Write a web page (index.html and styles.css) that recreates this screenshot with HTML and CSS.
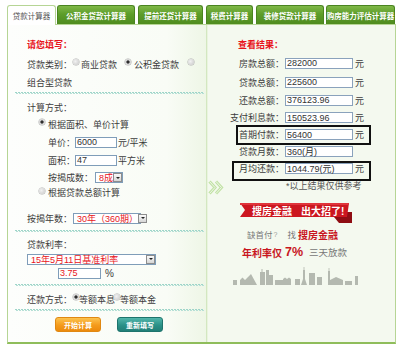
FILE: index.html
```html
<!DOCTYPE html>
<html lang="zh">
<head>
<meta charset="utf-8">
<title>贷款计算器</title>
<link rel="stylesheet" href="styles.css">
</head>
<body>
<div class="tabs">
  <div class="tab active w1">贷款计算器</div>
  <div class="tab w2">公积金贷款计算器</div>
  <div class="tab w3">提前还贷计算器</div>
  <div class="tab w4">税费计算器</div>
  <div class="tab w5">装修贷款计算器</div>
  <div class="tab w6">购房能力评估计算器</div>
</div>
<div class="content">
  <div class="left">
    <div class="l title">请您填写：</div>
    <div class="l h20"><span>贷款类别：</span><i class="radio g1"></i><span>商业贷款</span><i class="radio on g2"></i><span>公积金贷款</span><i class="radio g3"></i></div>
    <div class="l h16">组合型贷款</div>
    <div class="sep"></div>
    <div class="l h18 mt4">计算方式：</div>
    <div class="l h16 sub"><i class="radio on g4"></i>根据面积、单价计算</div>
    <div class="l h18 mt1 sub2"><span>单价：</span><span class="input iw42">6000</span><span class="u1">元/平米</span></div>
    <div class="l h18 sub2"><span>面积：</span><span class="input iw42">47</span><span class="u1">平方米</span></div>
    <div class="l h17 sub2"><span>按揭成数：</span><span class="select s8"><span>8成</span><b class="dd"></b></span></div>
    <div class="l h13 sub"><i class="radio g4"></i>根据贷款总额计算</div>
    <div class="l h18 mt10"><span>按揭年数：</span><span class="select s30"><span>30年（360期）</span><b class="dd"></b></span></div>
    <div class="sep mt3"></div>
    <div class="l h17 mt4">贷款利率：</div>
    <div class="l h12"><span class="select srate"><span>15年5月11日基准利率</span><b class="dd"></b></span></div>
    <div class="l h12 mt2 ind"><span class="input iw43 red">3.75</span><span class="pct">%</span></div>
    <div class="sep mt5"></div>
    <div class="l h18 mt4"><span>还款方式：</span><i class="radio on g5"></i><span>等额本息</span><i class="radio g6"></i><span>等额本金</span></div>
    <div class="sep mt1"></div>
    <div class="btns"><span class="btn orange">开始计算</span><span class="btn teal">重新填写</span></div>
  </div>
  <div class="divider"></div>
  <div class="right">
    <div class="rtitle">查看结果：</div>
    <div class="res h18"><span class="rl">房款总额：</span><span class="rin">282000</span><span class="unit">元</span></div>
    <div class="res h18 mt1"><span class="rl">贷款总额：</span><span class="rin">225600</span><span class="unit">元</span></div>
    <div class="res h18"><span class="rl">还款总额：</span><span class="rin">376123.96</span><span class="unit">元</span></div>
    <div class="res h17"><span class="rl">支付利息款：</span><span class="rin">150523.96</span><span class="unit">元</span></div>
    <div class="res h17 box1"><span class="rl">首期付款：</span><span class="rin">56400</span><span class="unit">元</span></div>
    <div class="res h17"><span class="rl">贷款月数：</span><span class="rin">360(月)</span></div>
    <div class="res h17 box2"><span class="rl">月均还款：</span><span class="rin">1044.79(元)</span><span class="unit">元</span></div>
    <div class="note">*以上结果仅供参考</div>
    <div class="promo">
      <div class="ribbon">
        <svg class="ribbon-bg" width="112" height="20" viewBox="0 0 112 20">
          <polygon points="94,9 112,9 112,20 99,20 94,14" fill="#8f0d13"/>
          <polygon points="0,0 109,0 107,14 0,14 5,7" fill="#cc1720"/>
          <polygon points="0,0 109,0 108.6,2 0,2" fill="#e0343b"/>
        </svg>
        <span class="rtext">搜房金融<span class="gap"></span>出大招了!</span>
      </div>
      <div class="p1"><span class="gray">缺首付</span><span class="q">?</span><span class="gray zhao">找</span><b class="redb">搜房金融</b></div>
      <div class="p2"><b class="redb">年利率仅</b><b class="redb big">7%</b><span class="gray2">三天放款</span></div>
      <div class="skyline">
        <svg width="126" height="18" viewBox="0 0 126 18">
          <polygon fill="#b4b9b0" points="1,18 1,13 5,13 5,18 8,18 8,13 10.5,10.5 13,13 19,7 25,18 28,18 28,5 29.5,5 29.5,2 30.5,2 30.5,5 33,5 33,18 34,18 34,3 37,3 37,8 41,8 41,18 43,18 43,13 51,13 51,12 53,10.5 55,12 57,10.5 59,12 59,18 63,18 63,12 68,12 68,18 69,18 71,12 71,3 71.6,3 71.6,0 72.4,0 72.4,3 73,3 73,12 75,18 77,18 77,6 83,6 83,18 85,18 85,10 90,10 90,18 96,18 96,4 96.6,4 96.6,1 97.4,1 97.4,4 98,4 98,13 104,10 111,13 111,18 113,18 113,14 120,14 120,18 123,18 123,9 126,9 126,18"/>
        </svg>
      </div>
    </div>
  </div>
  <svg class="chev" width="16" height="15" viewBox="0 0 16 15">
    <polyline points="1.5,1.5 7,7.5 1.5,13.5" fill="none" stroke="#c2e2a6" stroke-width="3"/>
    <polyline points="8,1.5 13.5,7.5 8,13.5" fill="none" stroke="#c2e2a6" stroke-width="3"/>
    <polyline points="1.5,1.5 7,7.5 1.5,13.5" fill="none" stroke="#eef8e6" stroke-width="1"/>
    <polyline points="8,1.5 13.5,7.5 8,13.5" fill="none" stroke="#eef8e6" stroke-width="1"/>
  </svg>
</div>
</body>
</html>
```

FILE: styles.css
```css
* { box-sizing: border-box; margin: 0; padding: 0; }
html, body { width: 400px; height: 351px; overflow: hidden; background: #fff; }
body {
  font-family: "Liberation Sans", "Noto Sans CJK SC", sans-serif;
  font-size: 9px;
  color: #3c3c3c;
}

/* tabs */
.tabs { display: flex; align-items: flex-end; height: 24px; padding: 5px 0 0 7px; position: relative; z-index: 2; }
.tab {
  height: 19px;
  display: flex; align-items: center; justify-content: center;
  white-space: nowrap;
  font-size: 7.5px; font-weight: bold; color: #fff;
  background: linear-gradient(#80b848, #5d9d2a 45%, #4f8c1f);
  border: 1px solid #4a8420; border-bottom: none;
  border-radius: 3px 3px 0 0;
}
.tab.active {
  background: #fff; color: #555; font-weight: normal;
  border-color: #b6d595;
  height: 20px; margin-bottom: -1px;
}
.w1 { width: 49px; margin-right: 1px; }
.w2 { width: 78px; margin-right: 3px; }
.w3 { width: 65px; margin-right: 3px; }
.w4 { width: 47px; margin-right: 3px; }
.w5 { width: 68px; margin-right: 2px; }
.w6 { width: 69px; }

/* content box */
.content {
  position: relative;
  margin-left: 7px; width: 389px; height: 320px;
  border: 1px solid #b6d595; border-bottom: 2px solid #8fbd5b;
  display: flex;
}
.left {
  width: 198px;
  padding: 9px 0 0 19px;
  background: linear-gradient(90deg, #fdfefc, #f9fcf6 80%, #eef6e6);
}
.divider { width: 2px; background: linear-gradient(90deg, #d3e7c0 50%, #e9f4de 50%); }
.right { flex: 1; background: #f4f9ef; padding-top: 10px; }

/* left rows */
.l { display: flex; align-items: center; white-space: nowrap; }
.title { height: 20px; color: #e8141c; font-weight: bold; }
.h20 { height: 20px; }
.h18 { height: 18px; }
.h17 { height: 17px; }
.h16 { height: 16px; }
.h13 { height: 13px; }
.h12 { height: 12px; }
.mt1 { margin-top: 1px; }
.mt2 { margin-top: 2px; }
.mt3 { margin-top: 3px; }
.mt4 { margin-top: 4px; }
.mt5 { margin-top: 5px; }
.mt10 { margin-top: 10px; }
.sub { padding-left: 12px; }
.sub2 { padding-left: 21px; }
.ind { padding-left: 31px; }

.sep {
  height: 2px; width: 189px; margin: 2px 0 0 -12px;
  background:
    repeating-linear-gradient(90deg, #9fd5c9 0 2px, transparent 2px 3px) 0 0 / 100% 1px no-repeat,
    repeating-linear-gradient(90deg, transparent 0 1px, #b6e0d6 1px 3px) 0 1px / 100% 1px no-repeat;
}
.sep.mt1 { margin-top: 1px; }
.sep.mt3 { margin-top: 3px; }
.sep.mt5 { margin-top: 5px; }

.radio {
  display: inline-block; flex: none;
  width: 6px; height: 6px; border-radius: 50%;
  background: radial-gradient(circle at 40% 40%, #f2f2f2, #c6c6c6);
  box-shadow: 0 0 0 0.5px #b0b0b0;
  margin-bottom: 4px;
}
.radio.on { background: radial-gradient(circle, #2e2e2e 0 1.3px, #dcdcdc 1.9px, #c2c2c2); }
.g1 { margin-left: 1px; margin-right: 2px; }
.g2 { margin-left: 8px; margin-right: 3px; }
.g3 { margin-left: 9px; }
.g4 { margin-right: 3px; }
.g5 { margin-left: 1px; margin-right: 0; }
.g6 { margin-left: -1px; margin-right: 0; }

.input {
  display: inline-flex; align-items: center;
  height: 11px; padding-left: 1px;
  background: #fff; border: 1px solid #7f9db9;
  color: #333;
}
.iw42 { width: 42px; }
.iw43 { width: 43px; }
.red { color: #e8141c; }
.u1 { margin-left: 1px; }
.pct { margin-left: 4px; font-size: 10px; }

.select {
  display: inline-flex; align-items: center; justify-content: space-between;
  height: 11px; padding-left: 3px;
  background: #fff; border: 1px solid #7f9db9;
  color: #e8141c;
}
.s8 { width: 28px; margin-left: 2px; }
.s30 { width: 68px; margin-left: 1px; }
.srate { width: 129px; }
.dd {
  width: 9px; height: 9px; flex: none;
  border: 1px solid #8d8d8d;
  background: linear-gradient(#fafafa, #d6d6d6);
  display: flex; align-items: center; justify-content: center;
}
.dd::after {
  content: ""; width: 0; height: 0;
  border-left: 2px solid transparent; border-right: 2px solid transparent;
  border-top: 2px solid #222;
}

.btns { display: flex; gap: 16px; margin-top: 6px; padding-left: 28px; }
.btn {
  width: 46px; height: 15px; border-radius: 3px;
  display: flex; align-items: center; justify-content: center;
  color: #fff; font-size: 7px; font-weight: bold;
}
.orange { background: linear-gradient(#fcc24e, #f49b1c 55%, #ec8a0c); border: 1px solid #e08812; }
.teal { background: linear-gradient(#52b6ab, #2b9188 55%, #217f77); border: 1px solid #1e746d; }

/* right rows */
.rtitle { height: 19px; display: flex; align-items: center; padding-left: 30px; color: #e8141c; font-weight: bold; }
.res { display: flex; align-items: center; white-space: nowrap; position: relative; }
.rl { width: 76px; text-align: right; }
.rin {
  display: inline-flex; align-items: center;
  width: 68px; height: 11px; margin-left: 1px; padding-left: 1px;
  background: #fff; border: 1px solid #8aa2bc; color: #333;
}
.unit { margin-left: 2px; }
.box1::before, .box2::before {
  content: ""; position: absolute; border: 2px solid #111;
}
.box1::before { left: 28px; top: -1px; width: 131px; height: 16px; }
.box2::before { left: 24px; top: 1px; width: 135px; height: 16px; }

.note { height: 16px; display: flex; align-items: center; padding-left: 78px; color: #555; }

.promo { margin: 10px 0 0 22px; width: 130px; }
.ribbon { position: relative; width: 112px; height: 20px; margin-left: 10px; }
.ribbon-bg { position: absolute; left: 0; top: 0; }
.rtext {
  position: relative; display: flex; align-items: center;
  height: 14px; padding-left: 12px;
  color: #fff; font-size: 10px; font-weight: bold; white-space: nowrap;
}
.gap { display: inline-block; width: 9px; }
.p1 { height: 22px; display: flex; align-items: center; padding-left: 17px; white-space: nowrap; }
.gray { color: #777; font-size: 8.5px; }
.q { color: #999; font-size: 7px; margin-left: 1px; }
.zhao { margin-left: 10px; margin-right: 2px; }
.redb { color: #c8161e; font-weight: bold; font-size: 10px; }
.p2 { height: 14px; display: flex; align-items: center; padding-left: 12px; white-space: nowrap; }
.big { font-size: 12.5px; margin-left: 3px; }
.gray2 { color: #777; font-size: 9.5px; margin-left: 6px; }
.skyline { display: flex; width: 126px; height: 18px; margin: 8px 0 0 2px; }
.skyline svg { display: block; flex: none; }

.chev { position: absolute; left: 200px; top: 155px; }
```
